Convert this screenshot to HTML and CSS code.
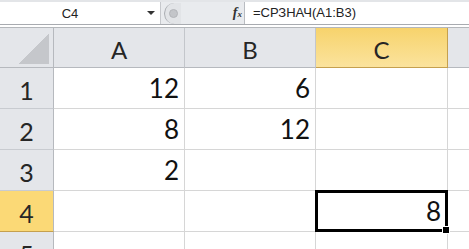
FILE: index.html
```html
<!DOCTYPE html>
<html lang="ru">
<head>
    <meta charset="UTF-8">
    <title>Excel</title>
    <link rel="stylesheet" href="styles.css">
</head>
<body>
    <div class="formula-bar">
        <div class="name-box">
            <span class="name">C4</span>
            <span class="arrow"></span>
        </div>
        <div class="divider">
            <span class="knob"><span class="dot"></span></span>
            <span class="fx"><i>f</i><small>x</small></span>
        </div>
        <div class="formula">=СРЗНАЧ(A1:B3)</div>
    </div>

    <div class="sheet">
        <div class="corner"><span class="tri"></span></div>
        <div class="col-head">A</div>
        <div class="col-head">B</div>
        <div class="col-head active">C</div>
        <div class="col-head last"></div>

        <div class="row-head">1</div>
        <div class="cell">12</div>
        <div class="cell">6</div>
        <div class="cell"></div>
        <div class="cell last"></div>

        <div class="row-head">2</div>
        <div class="cell">8</div>
        <div class="cell">12</div>
        <div class="cell"></div>
        <div class="cell last"></div>

        <div class="row-head">3</div>
        <div class="cell">2</div>
        <div class="cell"></div>
        <div class="cell"></div>
        <div class="cell last"></div>

        <div class="row-head active">4</div>
        <div class="cell"></div>
        <div class="cell"></div>
        <div class="cell selected">8<span class="handle"></span></div>
        <div class="cell last"></div>

        <div class="row-head">5</div>
        <div class="cell"></div>
        <div class="cell"></div>
        <div class="cell"></div>
        <div class="cell last"></div>
    </div>
</body>
</html>
```

FILE: styles.css
```css
body {
    margin: 0;
    width: 469px;
    height: 249px;
    overflow: hidden;
    background-color: #fff;
    font-family: Lato, "Liberation Sans", sans-serif;
}
.formula-bar {
    display: flex;
    height: 25px;
    background-color: #e9ebee;
    border-top: 2px solid #e3e5e8;
    border-bottom: 1px solid #a8abb0;
    box-sizing: border-box;
}
.name-box {
    width: 160px;
    display: flex;
    align-items: center;
    background-color: #fff;
    border-right: 1px solid #c6c8cc;
}
.name {
    width: 140px;
    text-align: center;
    font-family: "Liberation Sans", sans-serif;
    font-size: 13px;
    color: #222;
}
.arrow {
    width: 0;
    height: 0;
    border-left: 4px solid transparent;
    border-right: 4px solid transparent;
    border-top: 4px solid #333;
    margin-left: 7px;
}
.divider {
    width: 84px;
    display: flex;
    align-items: center;
    justify-content: space-between;
    padding: 0 2px 0 3px;
    box-sizing: border-box;
    border-right: 1px solid #b9bcc1;
}
.knob {
    width: 16px;
    height: 21px;
    border-radius: 11px 0 0 11px;
    border-left: 1px solid #a9acb1;
    background-color: #e2e4e7;
    display: flex;
    align-items: center;
    justify-content: center;
}
.dot {
    width: 7px;
    height: 7px;
    border-radius: 50%;
    background-color: #c3c5c9;
    border: 1px solid #b3b5b9;
}
.fx {
    font-family: "Liberation Serif", serif;
    font-size: 14px;
    color: #333;
    font-weight: bold;
}
.fx small {
    font-size: 9px;
    font-style: italic;
}
.formula {
    flex: 1;
    background-color: #fff;
    padding-left: 8px;
    font-family: "Liberation Sans", sans-serif;
    font-size: 13px;
    line-height: 22px;
    color: #222;
}
.sheet {
    display: grid;
    grid-template-columns: 54px 131px 131px 132px 1fr;
    grid-template-rows: 40px repeat(5, 41px);
    margin-top: 2px;
    border-top: 1px solid #b4b7bb;
}
.corner {
    background-color: #e4e6ea;
    border-right: 1px solid #b6b9be;
    border-bottom: 1px solid #b6b9be;
    position: relative;
}
.tri {
    position: absolute;
    right: 4px;
    bottom: 3px;
    width: 30px;
    height: 30px;
    background: linear-gradient(to bottom right, transparent 50%, #c5c7cb 50%);
}
.col-head, .row-head {
    background-color: #e4e6ea;
    color: #262626;
    font-size: 24px;
    display: flex;
    align-items: center;
    justify-content: center;
    padding-top: 4px;
    box-sizing: border-box;
    border-right: 1px solid #c3c6cb;
    border-bottom: 1px solid #b6b9be;
}
.col-head.active {
    background: linear-gradient(#f7d36c, #fbe39d);
    border-right-color: #c5a04e;
    border-bottom-color: #c5a04e;
}
.row-head {
    font-size: 25px;
    border-right-color: #b6b9be;
    border-bottom-color: #c8cbd0;
}
.row-head.active {
    background: #fbd976;
    border-bottom-color: #c5a04e;
}
.col-head.last {
    border-right: none;
}
.cell {
    border-right: 1px solid #d6d6d6;
    border-bottom: 1px solid #d6d6d6;
    font-size: 26px;
    color: #111;
    display: flex;
    align-items: flex-end;
    justify-content: flex-end;
    padding: 0 5px 4px 0;
    box-sizing: border-box;
}
.cell.last {
    border-right: none;
}
.cell.selected {
    position: relative;
    margin: -1px 0 0 -1px;
    border: 3px solid #000;
    padding: 0 4px 2px 0;
}
.handle {
    position: absolute;
    right: -5px;
    bottom: -5px;
    width: 6px;
    height: 6px;
    background-color: #000;
    border: 1px solid #fff;
}
```
